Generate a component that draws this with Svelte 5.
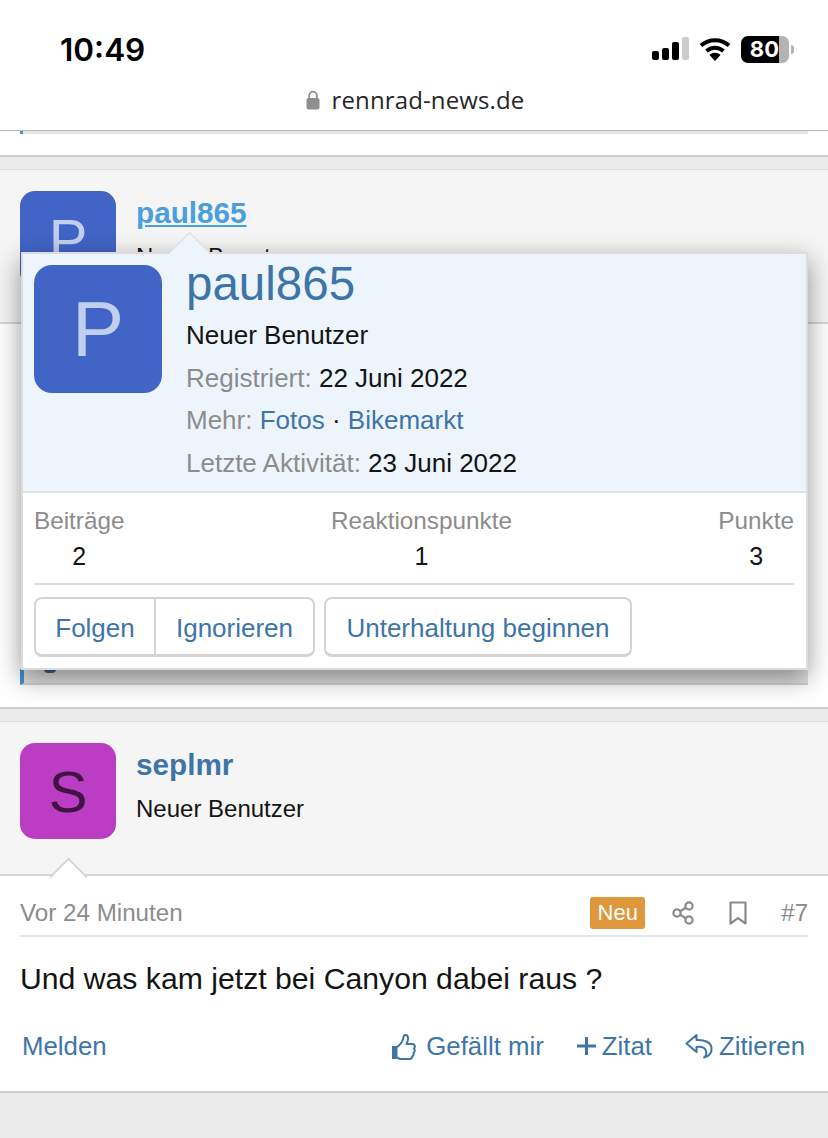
<script>
  const stats = [
    { label: "Beiträge", value: "2" },
    { label: "Reaktionspunkte", value: "1" },
    { label: "Punkte", value: "3" }
  ];
</script>

<div class="screen">
  <header class="topBar">
    <div class="status">
      <span class="time">10:49</span>
      <div class="statusIcons">
        <svg class="signal" width="38" height="24" viewBox="0 0 38 24">
          <rect x="0" y="14" width="7" height="9" rx="2" fill="#000" />
          <rect x="10" y="11" width="7" height="12" rx="2" fill="#000" />
          <rect x="20" y="5" width="7" height="18" rx="2" fill="#000" />
          <rect x="30" y="0" width="7" height="23" rx="2" fill="#ccc" />
        </svg>
        <svg class="wifi" width="32" height="26" viewBox="0 0 32 26">
          <path d="M2 9.5C10 2.5 22 2.5 30 9.5M7.500 15C12.500 10.500 19.500 10.500 24.500 15" fill="none" stroke="#000" stroke-width="4" stroke-linecap="butt" />
          <path d="M10.500 19C13.500 16 18.500 16 21.500 19L16 25Z" fill="#000" />
        </svg>
        <div class="battery">
          <span class="batteryFill">80</span>
          <span class="batteryRest"></span>
          <span class="batteryNub"></span>
        </div>
      </div>
    </div>
    <div class="url">
      <svg width="14" height="20" viewBox="0 0 14 20">
        <path d="M3.200 9V5.500a3.800 3.800 0 0 1 7.600 0V9" fill="none" stroke="#8e8e8e" stroke-width="1.800" />
        <rect x="0.500" y="8" width="13" height="11.500" rx="2" fill="#8e8e8e" />
      </svg>
      <span>rennrad-news.de</span>
    </div>
  </header>

  <section class="postEnd">
    <div class="quoteStub"></div>
  </section>
  <div class="band"></div>

  <section class="userBlock first">
    <div class="avatar blue">P</div>
    <div class="userInfo">
      <a class="userName hovered" href="#paul">paul865</a>
      <span class="userTitle">Neuer Benutzer</span>
    </div>
  </section>
  <section class="hiddenPost">
    <div class="quoteBox"><span class="descender"></span></div>
  </section>
  <div class="band"></div>

  <section class="userBlock">
    <div class="avatar purple">S</div>
    <div class="userInfo">
      <a class="userName" href="#sep">seplmr</a>
      <span class="userTitle">Neuer Benutzer</span>
    </div>
    <span class="userArrow"></span>
  </section>
  <section class="post">
    <div class="postMeta">
      <span class="postDate">Vor 24 Minuten</span>
      <div class="metaRight">
        <span class="newBadge">Neu</span>
        <svg class="shareIcon" width="22" height="24" viewBox="0 0 22 24">
          <g fill="none" stroke="#8a8a8a" stroke-width="2.200">
            <circle cx="17" cy="5" r="3.600" />
            <circle cx="5" cy="12" r="3.600" />
            <circle cx="17" cy="19" r="3.600" />
            <path d="M8.200 10.200L13.800 6.800M8.200 13.800L13.800 17.200" />
          </g>
        </svg>
        <svg class="bookmarkIcon" width="18" height="24" viewBox="0 0 18 24">
          <path d="M1.500 1.500H16.500V22.500L9 17.200L1.500 22.500Z" fill="none" stroke="#8a8a8a" stroke-width="2.200" stroke-linejoin="round" />
        </svg>
        <span class="postNum">#7</span>
      </div>
    </div>
    <p class="postText">Und was kam jetzt bei Canyon dabei raus ?</p>
    <div class="postActions">
      <a class="action" href="#melden">Melden</a>
      <div class="actionsRight">
        <a class="action like" href="#like">
          <svg width="25" height="27" viewBox="0 0 25 27">
            <path d="M1 13H6.500V26H1Z" fill="#3d75a8" />
            <path d="M6 14C9 12 12 8 12.500 4C12.800 1.500 16.500 1 17 4.500C17.300 7 16.500 9 15.500 11H21.500C24 11 24.500 14 23 15.500C24.200 17 24 19 22.500 20C23 21.800 22.300 23 21 23.700C21 25.500 20 26 18.500 26H10C8 26 7 25 6 24.500" fill="none" stroke="#3d75a8" stroke-width="2" stroke-linejoin="round" />
          </svg>
          Gefällt mir
        </a>
        <a class="action quote" href="#zitat">
          <svg width="19" height="18" viewBox="0 0 19 18">
            <path d="M9.500 0V18M0 9H19" stroke="#3d75a8" stroke-width="3" />
          </svg>
          Zitat
        </a>
        <a class="action reply" href="#zitieren">
          <svg width="28" height="26" viewBox="0 0 28 26">
            <path d="M11.500 2L1.500 10.500L11.500 19V14C16 13.500 20 14.500 21 18C21.800 21 20.500 23.500 19 24.500C24 23.500 27 19.500 26.500 15C26 9.500 20 6.500 11.500 7Z" fill="none" stroke="#3d75a8" stroke-width="2" stroke-linejoin="round" />
          </svg>
          Zitieren
        </a>
      </div>
    </div>
  </section>

  <aside class="memberTip">
    <span class="tipArrow"></span>
    <div class="tipHead">
      <div class="tipAvatar">P</div>
      <div class="tipInfo">
        <a class="tipName" href="#paul">paul865</a>
        <div class="tipRow first">Neuer Benutzer</div>
        <div class="tipRow"><span class="muted">Registriert:</span> 22 Juni 2022</div>
        <div class="tipRow"><span class="muted">Mehr:</span> <a href="#fotos">Fotos</a> · <a href="#markt">Bikemarkt</a></div>
        <div class="tipRow"><span class="muted">Letzte Aktivität:</span> 23 Juni 2022</div>
      </div>
    </div>
    <div class="tipBody">
      <div class="stats">
        {#each stats as s}
          <div class="stat">
            <span class="statLabel">{s.label}</span>
            <span class="statValue">{s.value}</span>
          </div>
        {/each}
      </div>
      <div class="buttons">
        <div class="btnGroup">
          <a class="btn folgen" href="#folgen">Folgen</a>
          <a class="btn ignore" href="#ignore">Ignorieren</a>
        </div>
        <a class="btn single" href="#pm">Unterhaltung beginnen</a>
      </div>
    </div>
  </aside>
</div>

<style>
  :global(body) {
    margin: 0;
    background: #fff;
  }

  .screen {
    position: relative;
    width: 828px;
    height: 1138px;
    overflow: hidden;
    font-family: "Liberation Sans", Arial, sans-serif;
    font-size: 26px;
    color: #141414;
    background: #ececec;
  }

  a {
    color: #3d75a8;
    text-decoration: none;
  }

  .topBar {
    position: relative;
    z-index: 2;
    height: 130px;
    background: #fff;
    border-bottom: 1px solid #b8b8b8;
  }

  .status {
    display: flex;
    justify-content: space-between;
    align-items: center;
    height: 36px;
    padding: 31px 34px 0 60px;
  }

  .time {
    font-family: Inter, sans-serif;
    font-size: 31.500px;
    font-weight: 600;
    color: #000;
  }

  .statusIcons {
    display: flex;
    align-items: center;
    gap: 10px;
  }

  .signal {
    margin: 0 -1px 0 1px;
  }

  .battery {
    position: relative;
    display: flex;
    width: 48px;
    height: 27px;
    margin-right: 5px;
    border-radius: 7px;
  }

  .batteryFill {
    width: 38px;
    background: #000;
    border-radius: 7px 0 0 7px;
    color: #fff;
    font-family: Inter, sans-serif;
    font-size: 22px;
    font-weight: 700;
    line-height: 27px;
    text-align: right;
  }

  .batteryRest {
    width: 10px;
    background: #b3b3b3;
    border-radius: 0 7px 7px 0;
  }

  .batteryNub {
    position: absolute;
    right: -5px;
    top: 9px;
    width: 3px;
    height: 9px;
    background: #b3b3b3;
    border-radius: 0 3px 3px 0;
  }

  .url {
    display: flex;
    justify-content: center;
    align-items: center;
    gap: 12px;
    margin-top: 16px;
    padding-left: 2px;
    font-family: "Open Sans", sans-serif;
    font-size: 24px;
    letter-spacing: 0.13px;
    color: #262626;
  }

  .postEnd {
    height: 24px;
    padding: 0 20px;
    background: #fff;
    border-bottom: 2px solid #cfcfcf;
  }

  .quoteStub {
    height: 3px;
    background: #e6e6e6;
    border-left: 3px solid #3e93d1;
  }

  .band {
    height: 12px;
    background: #ececec;
    border-bottom: 1px solid #dedede;
  }

  .userBlock {
    position: relative;
    display: flex;
    height: 131px;
    padding: 21px 20px 0;
    gap: 20px;
    background: #f5f5f5;
    border-bottom: 2px solid #d5d5d5;
  }

  .avatar {
    display: flex;
    justify-content: center;
    align-items: center;
    width: 96px;
    height: 96px;
    border-radius: 15px;
    font-size: 58px;
  }

  .blue {
    background: #4164c6;
    color: #c1cfee;
  }

  .purple {
    background: #bb3dc4;
    color: #3f1342;
  }

  .userInfo {
    display: flex;
    flex-direction: column;
  }

  .userName {
    margin-top: 5px;
    font-size: 29.700px;
    font-weight: 700;
  }

  .hovered {
    color: #4a9fdc;
    text-decoration: underline;
  }

  .userTitle {
    margin-top: 13px;
    font-size: 24px;
  }

  .userArrow {
    position: absolute;
    left: 54.500px;
    bottom: -15.500px;
    width: 25px;
    height: 25px;
    background: #fff;
    border-left: 2px solid #d5d5d5;
    border-top: 2px solid #d5d5d5;
    transform: rotate(45deg);
  }

  .hiddenPost {
    height: 16px;
    padding: 345px 20px 22px;
    background: #fff;
    border-bottom: 2px solid #cfcfcf;
  }

  .quoteBox {
    position: relative;
    height: 16px;
    background: #e0e0e0;
    border-left: 4px solid #3e93d1;
    border-bottom: 2px solid #d0d0d0;
    box-sizing: border-box;
  }

  .descender {
    position: absolute;
    left: 20px;
    top: 0;
    width: 12px;
    height: 4px;
    background: #3d5f8e;
    border-radius: 0 0 6px 6px;
  }

  .post {
    height: 215px;
    padding: 0 20px;
    background: #fff;
    border-bottom: 2px solid #cfcfcf;
  }

  .postMeta {
    display: flex;
    justify-content: space-between;
    align-items: center;
    height: 61px;
    padding-top: 15px;
    box-sizing: border-box;
    border-bottom: 2px solid #e6e6e6;
  }

  .postDate {
    font-size: 24.200px;
    color: #8c8c8c;
  }

  .metaRight {
    display: flex;
    align-items: center;
  }

  .newBadge {
    display: block;
    width: 55px;
    height: 32px;
    margin-right: 27px;
    border-radius: 3px;
    background: #e0963a;
    color: #fff;
    font-size: 22px;
    line-height: 32px;
    text-align: center;
  }

  .shareIcon {
    margin-right: 35px;
  }

  .bookmarkIcon {
    margin-right: 34px;
  }

  .postNum {
    font-size: 24px;
    color: #8a8a8a;
  }

  .postText {
    margin: 27px 0 0;
    font-size: 30.200px;
    line-height: 30px;
    white-space: nowrap;
  }

  .postActions {
    display: flex;
    justify-content: space-between;
    align-items: center;
    margin-top: 37px;
    padding: 0 3px 0 2px;
  }

  .action {
    display: flex;
    align-items: center;
    font-size: 25.800px;
    line-height: 30px;
  }

  .actionsRight {
    display: flex;
    align-items: center;
    gap: 33px;
  }

  .like {
    gap: 10px;
  }

  .quote,
  .reply {
    gap: 6px;
  }

  .memberTip {
    position: absolute;
    z-index: 1;
    left: 21px;
    top: 252px;
    width: 787px;
    height: 418px;
    box-sizing: border-box;
    background: #fff;
    border: 2px solid #dcdcdc;
    box-shadow: 0 8px 24px rgba(0, 0, 0, 0.42);
  }

  .tipArrow {
    position: absolute;
    left: 152px;
    top: -16px;
    width: 28px;
    height: 28px;
    background: #edf4fc;
    border-left: 1px solid #dcdcdc;
    border-top: 1px solid #dcdcdc;
    transform: rotate(45deg);
  }

  .tipHead {
    position: relative;
    display: flex;
    gap: 24px;
    height: 226px;
    padding: 11px 11px 0;
    background: #edf4fc;
    border-bottom: 2px solid #dfe3e8;
  }

  .tipAvatar {
    display: flex;
    justify-content: center;
    align-items: center;
    flex: none;
    width: 128px;
    height: 128px;
    border-radius: 18px;
    background: #4164c6;
    color: #c1cfee;
    font-size: 78px;
  }

  .tipInfo {
    display: flex;
    flex-direction: column;
  }

  .tipName {
    font-size: 47.500px;
    line-height: 38px;
  }

  .tipRow {
    height: 42.500px;
    line-height: 42.500px;
    white-space: nowrap;
  }

  .tipRow.first {
    margin-top: 11px;
  }

  .muted {
    color: #8c8c8c;
  }

  .tipBody {
    padding: 0 12px 0 11px;
  }

  .stats {
    display: flex;
    justify-content: space-between;
    height: 92px;
    padding-top: 13px;
    box-sizing: border-box;
    border-bottom: 2px solid #dedede;
  }

  .stat {
    display: flex;
    flex-direction: column;
    align-items: center;
  }

  .statLabel {
    font-size: 24.300px;
    line-height: 30px;
    color: #8c8c8c;
  }

  .statValue {
    margin-top: 5px;
    font-size: 25px;
    line-height: 30px;
  }

  .buttons {
    display: flex;
    gap: 9px;
    margin-top: 12px;
  }

  .btnGroup {
    display: flex;
  }

  .btn {
    display: flex;
    justify-content: center;
    align-items: center;
    height: 60px;
    padding-top: 3px;
    box-sizing: border-box;
    border: 2px solid #d4d4d4;
    border-bottom-width: 3px;
    background: #fff;
  }

  .folgen {
    width: 122px;
    border-radius: 8px 0 0 8px;
  }

  .ignore {
    width: 159px;
    border-left: none;
    border-radius: 0 8px 8px 0;
  }

  .single {
    width: 308px;
    border-radius: 8px;
  }
</style>
